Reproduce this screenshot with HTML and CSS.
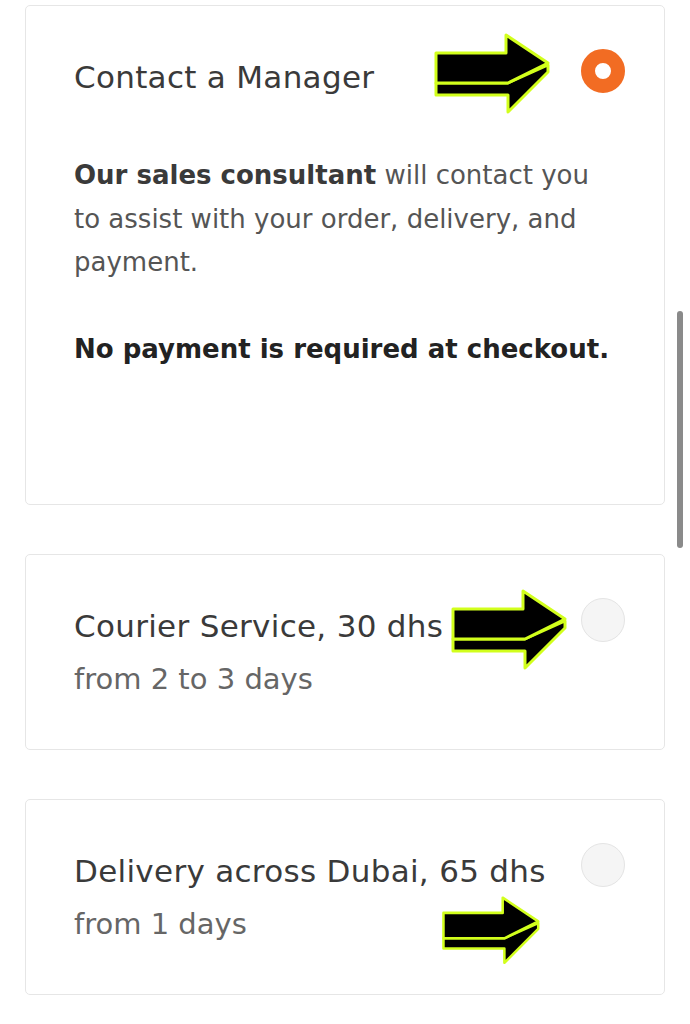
FILE: index.html
```html
<!DOCTYPE html>
<html lang="en">
<head>
  <meta charset="UTF-8">
  <meta name="viewport" content="width=device-width, initial-scale=1.0">
  <title>Delivery options</title>
  <link rel="stylesheet" href="styles.css">
</head>
<body>
  <svg class="defs" width="0" height="0">
    <symbol id="arrow" viewBox="0 0 130 90">
      <polygon points="10,65 82,65 82,82 122,42 122,35 82,53 10,53" />
      <polygon points="10,23 80,23 80,5 122,33 82,53 10,53" />
    </symbol>
  </svg>

  <div class="options">
    <div class="option">
      <div class="option-head">
        <span class="option-title">Contact a Manager</span>
        <span class="radio radio-checked"></span>
      </div>
      <div class="option-text">
        <p><b>Our sales consultant</b> will contact you to assist with your order, delivery, and payment.</p>
        <p class="option-note">No payment is required at checkout.</p>
      </div>
      <svg class="pointer pointer-one"><use href="#arrow" /></svg>
    </div>

    <div class="option">
      <div class="option-head">
        <span class="option-title">Courier Service, 30 dhs</span>
        <span class="radio"></span>
      </div>
      <div class="option-sub">from 2 to 3 days</div>
      <svg class="pointer pointer-two"><use href="#arrow" /></svg>
    </div>

    <div class="option">
      <div class="option-head">
        <span class="option-title">Delivery across Dubai, 65 dhs</span>
        <span class="radio"></span>
      </div>
      <div class="option-sub">from 1 days</div>
      <svg class="pointer pointer-three"><use href="#arrow" /></svg>
    </div>
  </div>

  <div class="scrollbar"></div>
</body>
</html>
```

FILE: styles.css
```css
body {
  margin: 0;
  background: #fff;
  font-family: 'DejaVu Sans', sans-serif;
  color: #3a3a3a;
}

.defs {
  position: absolute;
}

.options {
  display: flex;
  flex-direction: column;
  gap: 49px;
  padding: 5px 25px 0 25px;
}

.option {
  position: relative;
  border: 1px solid #e6e6e6;
  border-radius: 5px;
  padding: 43px 39px 48px 48px;
}

.option:first-child {
  min-height: 407px;
}

.option-head {
  display: flex;
  justify-content: space-between;
  align-items: flex-start;
}

.option-title {
  font-size: 31px;
  letter-spacing: 0.3px;
  line-height: 44px;
  padding-top: 6px;
}

.radio {
  width: 44px;
  height: 44px;
  box-sizing: border-box;
  border-radius: 50%;
  border: 1px solid #e4e4e4;
  background: #f5f5f5;
  flex-shrink: 0;
}

.radio-checked {
  border: 14px solid #f26c23;
  background: #fff;
}

.option-text {
  margin-top: 55px;
  padding-right: 10px;
  font-size: 26px;
  line-height: 43.5px;
  color: #555;
}

.option-text p {
  margin: 0;
}

.option-text b {
  color: #3a3a3a;
}

.option-note {
  margin-top: 43.5px !important;
  font-weight: bold;
  color: #222;
}

.option-sub {
  margin-top: 11px;
  margin-bottom: 2px;
  font-size: 29px;
  line-height: 40px;
  color: #666;
}

.pointer {
  position: absolute;
  width: 130px;
  height: 90px;
  fill: #000;
  stroke: #d2ff1c;
  stroke-width: 3;
  stroke-linejoin: round;
}

.pointer-one {
  left: 400px;
  top: 24px;
}

.pointer-two {
  left: 417px;
  top: 28px;
  height: 96px;
}

.pointer-three {
  left: 409px;
  top: 93px;
  width: 110px;
  height: 77px;
}

.scrollbar {
  position: fixed;
  left: 677px;
  top: 311px;
  width: 6px;
  height: 237px;
  border-radius: 3px;
  background: #8a8a8a;
}
```
